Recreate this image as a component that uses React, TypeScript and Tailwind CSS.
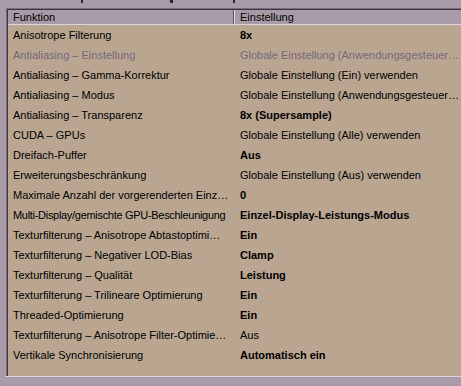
import React from "react";

type Row = { k: string; v: string; bold?: boolean; disabled?: boolean; tight?: boolean };

const rows: Row[] = [
  { k: "Anisotrope Filterung", v: "8x", bold: true },
  { k: "Antialiasing – Einstellung", v: "Globale Einstellung (Anwendungsgesteuer…", disabled: true },
  { k: "Antialiasing – Gamma-Korrektur", v: "Globale Einstellung (Ein) verwenden" },
  { k: "Antialiasing – Modus", v: "Globale Einstellung (Anwendungsgesteuer…" },
  { k: "Antialiasing – Transparenz", v: "8x (Supersample)", bold: true },
  { k: "CUDA – GPUs", v: "Globale Einstellung (Alle) verwenden" },
  { k: "Dreifach-Puffer", v: "Aus", bold: true },
  { k: "Erweiterungsbeschränkung", v: "Globale Einstellung (Aus) verwenden" },
  { k: "Maximale Anzahl der vorgerenderten Einz…", v: "0", bold: true },
  { k: "Multi-Display/gemischte GPU-Beschleunigung", v: "Einzel-Display-Leistungs-Modus", bold: true, tight: true },
  { k: "Texturfilterung – Anisotrope Abtastoptimi…", v: "Ein", bold: true },
  { k: "Texturfilterung – Negativer LOD-Bias", v: "Clamp", bold: true },
  { k: "Texturfilterung – Qualität", v: "Leistung", bold: true },
  { k: "Texturfilterung – Trilineare Optimierung", v: "Ein", bold: true },
  { k: "Threaded-Optimierung", v: "Ein", bold: true },
  { k: "Texturfilterung – Anisotrope Filter-Optimie…", v: "Aus" },
  { k: "Vertikale Synchronisierung", v: "Automatisch ein", bold: true },
];

export default function App() {
  return (
    <div
      className="w-[461px] h-[386px] overflow-hidden bg-[#a89aa6] text-[11px] leading-[13px] text-black"
      style={{ fontFamily: '"Liberation Sans", Arial, sans-serif' }}
    >
      <div className="h-[8px] flex items-start">
        <span className="ml-[81px] w-[2px] h-[3px] bg-[#2a2430]" />
        <span className="ml-[87px] w-[3px] h-[3px] bg-[#2a2430]" />
        <span className="ml-[60px] w-[2px] h-[3px] bg-[#2a2430]" />
      </div>
      <div className="ml-[6px] border-t border-l border-[#7a6e7c]">
        <div className="border-t border-l border-[#3a3440]">
          <div className="flex h-[15px] bg-[#a89aa6] border-b border-[#ddd4dc]">
            <div className="w-[226px] pl-[5px] flex items-center border-r border-[#5c5260]">Funktion</div>
            <div className="flex-1 pl-[5px] flex items-center border-l border-[#e2dae2]">Einstellung</div>
          </div>
          <div className="bg-[#b9a590] h-[351px]">
            {rows.map((r, i) => (
              <div key={i} className="flex h-[20px] items-center">
                <div
                  className={
                    "w-[227px] pl-[5px] whitespace-nowrap overflow-visible " +
                    (r.tight ? "tracking-[-0.3px]" : "")
                  }
                >
                  <span className={r.disabled ? "text-[#76687e]" : ""}>{r.k}</span>
                </div>
                <div
                  className={
                    "flex-1 pl-[5px] whitespace-nowrap overflow-hidden " +
                    (r.bold ? "font-bold " : "") +
                    (r.disabled ? "text-[#76687e]" : "")
                  }
                >
                  {r.v}
                </div>
              </div>
            ))}
          </div>
        </div>
      </div>
      <div className="h-[1px] ml-[5px] bg-[#dcd4dc]" />
    </div>
  );
}
